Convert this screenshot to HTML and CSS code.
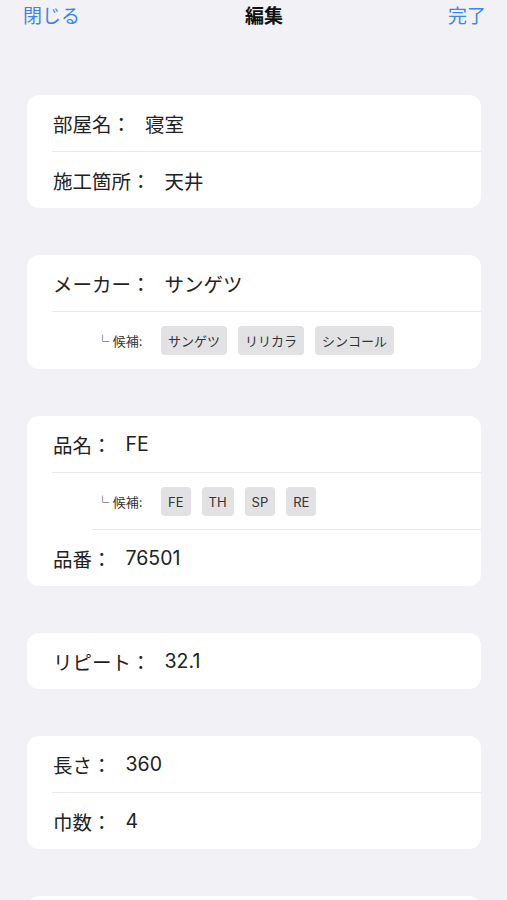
FILE: index.html
```html
<!DOCTYPE html>
<html lang="ja">
<head>
<meta charset="utf-8">
<link rel="stylesheet" href="styles.css">
</head>
<body>
<div class="nav">
  <span class="nav-btn">閉じる</span>
  <span class="nav-title">編集</span>
  <span class="nav-btn">完了</span>
</div>
<div class="list">
  <div class="card">
    <div class="row"><span class="label">部屋名：</span><span class="value">寝室</span></div>
    <div class="sep"></div>
    <div class="row"><span class="label">施工箇所：</span><span class="value">天井</span></div>
  </div>
  <div class="card">
    <div class="row"><span class="label">メーカー：</span><span class="value">サンゲツ</span></div>
    <div class="sep"></div>
    <div class="cand-row">
      <span class="cand-label">└ 候補:</span>
      <div class="chips">
        <span class="chip">サンゲツ</span>
        <span class="chip">リリカラ</span>
        <span class="chip">シンコール</span>
      </div>
    </div>
  </div>
  <div class="card">
    <div class="row"><span class="label">品名：</span><span class="value">FE</span></div>
    <div class="sep"></div>
    <div class="cand-row">
      <span class="cand-label">└ 候補:</span>
      <div class="chips">
        <span class="chip">FE</span>
        <span class="chip">TH</span>
        <span class="chip">SP</span>
        <span class="chip">RE</span>
      </div>
    </div>
    <div class="sep deep"></div>
    <div class="row"><span class="label">品番：</span><span class="value">76501</span></div>
  </div>
  <div class="card">
    <div class="row"><span class="label">リピート：</span><span class="value">32.1</span></div>
  </div>
  <div class="card">
    <div class="row"><span class="label">長さ：</span><span class="value">360</span></div>
    <div class="sep"></div>
    <div class="row"><span class="label">巾数：</span><span class="value">4</span></div>
  </div>
  <div class="card">
    <div class="row"></div>
  </div>
</div>
</body>
</html>
```
FILE: styles.css
```css
html, body {
  margin: 0;
  padding: 0;
  background: #f1f1f6;
  font-family: "Inter", "Noto Sans CJK JP", sans-serif;
  color: #222;
}
body {
  height: 900px;
  overflow: hidden;
}
.nav {
  display: flex;
  justify-content: space-between;
  align-items: center;
  height: 28px;
  padding: 0 21px 0 23px;
}
.nav-btn {
  font-size: 19px;
  color: #3a86f0;
}
.nav-title {
  font-size: 19px;
  font-weight: 700;
  color: #111;
}
.list {
  display: flex;
  flex-direction: column;
  gap: 47px;
  padding: 67px 26px 0 27px;
}
.card {
  background: #fff;
  border-radius: 12px;
  display: flex;
  flex-direction: column;
}
.row {
  height: 56px;
  display: flex;
  align-items: center;
  padding-left: 26px;
  font-size: 19.5px;
}
.label {
  margin-right: 14px;
}
.sep {
  height: 1px;
  background: #e9e9ec;
  margin-left: 25px;
}
.sep.deep {
  margin-left: 65px;
}
.cand-row {
  height: 56px;
  display: flex;
  align-items: center;
  padding-left: 69px;
}
.cand-row + .sep.deep + .row {
  height: 56px;
}
.card .sep + .cand-row {
  height: 57px;
}
.card .cand-row + .sep.deep {
  margin-top: -1px;
}
.cand-label {
  font-size: 13px;
  color: #333;
  width: 65px;
}
.chips {
  display: flex;
  gap: 11px;
}
.chip {
  background: #e2e2e4;
  border-radius: 4px;
  height: 29px;
  padding: 0 7px;
  display: flex;
  align-items: center;
  font-size: 13px;
  color: #333;
}
```
